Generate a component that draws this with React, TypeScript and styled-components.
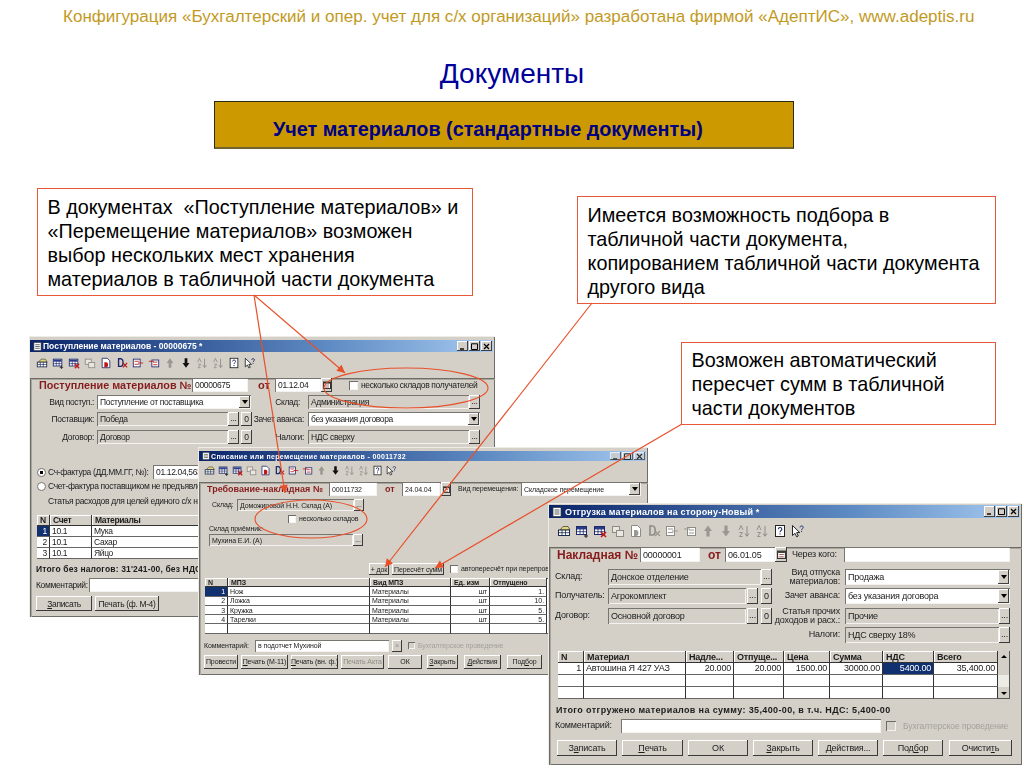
import styled, { createGlobalStyle } from "styled-components";

const GlobalStyle = createGlobalStyle`
  html, body {
    margin: 0;
    padding: 0;
    background: #fff;
    font-family: "Liberation Sans", Arial, sans-serif;
  }
`;

const Slide = styled.div`
  position: relative;
  width: 1024px;
  height: 768px;
  overflow: hidden;
  background: #fff;
`;

const TopLine = styled.div`
  padding-top: 8px;
  padding-left: 63px;
  font-size: 17.05px;
  line-height: 18px;
  color: #c29a1e;
  white-space: nowrap;
`;

const Heading = styled.h1`
  margin: 28px 0 0;
  text-align: center;
  font-size: 28px;
  line-height: 40px;
  font-weight: 400;
  color: #000099;
`;

const Banner = styled.div`
  margin: 7px 0 0 214px;
  width: 580px;
  height: 48px;
  box-sizing: border-box;
  padding: 15px 0 0 58px;
  background: #cc9900;
  border: 1px solid #2b2b10;
  border-bottom: 2px solid #6f6430;
  font-size: 19.8px;
  line-height: 24px;
  font-weight: 700;
  color: #000080;
  white-space: nowrap;
`;

const Callout = styled.div<{ $x: number; $y: number; $w: number; $h: number; $pt: number }>`
  position: absolute;
  left: ${(p) => p.$x}px;
  top: ${(p) => p.$y}px;
  width: ${(p) => p.$w}px;
  height: ${(p) => p.$h}px;
  box-sizing: border-box;
  padding: ${(p) => p.$pt}px 0 0 9.5px;
  background: #fff;
  border: 1px solid #e8583a;
  font-size: 19.8px;
  line-height: 24px;
  color: #000;
  white-space: pre;
`;

const Overlay = styled.svg`
  position: absolute;
  left: 0;
  top: 0;
  pointer-events: none;
`;

const Win = styled.div<{ $x: number; $y: number; $w: number; $h: number; $fs: number; $ls: number; $pt: number }>`
  position: absolute;
  left: ${(p) => p.$x}px;
  top: ${(p) => p.$y}px;
  width: ${(p) => p.$w}px;
  height: ${(p) => p.$h}px;
  box-sizing: border-box;
  padding-top: ${(p) => p.$pt}px;
  overflow: hidden;
  background: #d4d0c8;
  box-shadow: inset 1px 1px #eeece6, inset -1px -1px #6e6c66;
  font-size: ${(p) => p.$fs}px;
  letter-spacing: ${(p) => p.$ls}px;
  color: #1c1c1c;
  filter: blur(0.3px);
`;

const TitleBar = styled.div<{ $h: number }>`
  display: flex;
  align-items: center;
  height: ${(p) => p.$h}px;
  margin: 0 2px 0 1px;
  padding-left: 3px;
  background: linear-gradient(90deg, #0a246a, #5f8cc4 65%, #a6caf0);
  color: #fff;
  font-weight: 700;
  white-space: nowrap;
`;

const TitleText = styled.span<{ $ml: number; $ls: number }>`
  margin-left: ${(p) => p.$ml}px;
  letter-spacing: ${(p) => p.$ls}px;
`;

const WinButtons = styled.div<{ $dim?: boolean }>`
  display: flex;
  gap: 1px;
  margin-left: auto;
  margin-right: 1px;
  height: calc(100% - 2px);
  opacity: ${(p) => (p.$dim ? 0.75 : 1)};
`;

const WinButton = styled.div`
  width: 11px;
  background: #d4d0c8;
  box-shadow: inset -1px -1px #404040, inset 1px 1px #fff;
  display: flex;
  align-items: center;
  justify-content: center;
`;

const Toolbar = styled.div<{ $h: number; $pl: number; $gap: number }>`
  display: flex;
  align-items: center;
  height: ${(p) => p.$h}px;
  padding-left: ${(p) => p.$pl}px;
  gap: ${(p) => p.$gap}px;
`;

const Panel = styled.div`
  height: 100%;
  margin-left: 1px;
  box-shadow: inset 1px 1px #6e6c66, inset 2px 2px #a8a59d;
`;

const Row = styled.div<{ $h: number; $mt: number; $ml?: number }>`
  display: flex;
  align-items: center;
  height: ${(p) => p.$h}px;
  margin-top: ${(p) => p.$mt}px;
  margin-left: ${(p) => (p.$ml ?? 0) - 1}px;
  white-space: nowrap;
`;

const DocTitle = styled.div<{ $w: number; $ml: number; $size: number }>`
  flex: none;
  width: ${(p) => p.$w}px;
  margin-left: ${(p) => p.$ml}px;
  font-size: ${(p) => p.$size}px;
  font-weight: 700;
  letter-spacing: 0;
  color: #861c1c;
`;

const Label = styled.div<{ $w?: number; $ml?: number; $right?: boolean; $color?: string; $bold?: boolean; $size?: number; $ls?: number }>`
  flex: none;
  width: ${(p) => (p.$w ? `${p.$w}px` : "auto")};
  margin-left: ${(p) => p.$ml ?? 0}px;
  text-align: ${(p) => (p.$right ? "right" : "left")};
  line-height: 1.05;
  color: ${(p) => p.$color ?? "inherit"};
  font-weight: ${(p) => (p.$bold ? 700 : 400)};
  ${(p) => (p.$size ? `font-size: ${p.$size}px;` : "")}
  ${(p) => (p.$ls !== undefined ? `letter-spacing: ${p.$ls}px;` : "")}
`;

const Field = styled.div<{ $w: number; $ml?: number; $gray?: boolean }>`
  flex: none;
  display: flex;
  align-items: center;
  box-sizing: border-box;
  width: ${(p) => p.$w}px;
  height: 100%;
  margin-left: ${(p) => p.$ml ?? 0}px;
  padding: 0 1px 0 3px;
  overflow: hidden;
  background: ${(p) => (p.$gray ? "#d4d0c8" : "#fff")};
  box-shadow: inset 1px 1px #77756f, inset -1px -1px #f4f3ef;
`;

const Btn = styled.div<{ $w: number; $ml?: number; $off?: boolean }>`
  flex: none;
  display: flex;
  align-items: center;
  justify-content: center;
  box-sizing: border-box;
  width: ${(p) => p.$w}px;
  height: 100%;
  margin-left: ${(p) => p.$ml ?? 0}px;
  background: #d4d0c8;
  box-shadow: inset -1px -1px #3a3a3a, inset 1px 1px #fff;
  color: ${(p) => (p.$off ? "#8f8d87" : "inherit")};
`;

const DropBtn = styled.div`
  flex: none;
  width: 11px;
  height: calc(100% - 2px);
  margin-left: auto;
  background: #d4d0c8;
  box-shadow: inset -1px -1px #404040, inset 1px 1px #fff;
  display: flex;
  align-items: center;
  justify-content: center;

  &::after {
    content: "";
    border-left: 3px solid transparent;
    border-right: 3px solid transparent;
    border-top: 4px solid #000;
  }
`;

const Check = styled.div<{ $size: number; $ml: number; $off?: boolean }>`
  flex: none;
  width: ${(p) => p.$size}px;
  height: ${(p) => p.$size}px;
  margin-left: ${(p) => p.$ml}px;
  background: ${(p) => (p.$off ? "#d4d0c8" : "#fff")};
  box-shadow: inset 1px 1px #6e6c66, inset -1px -1px #f4f3ef;
`;

const Radio = styled.div<{ $on?: boolean }>`
  flex: none;
  box-sizing: border-box;
  width: 9px;
  height: 9px;
  margin-left: 8px;
  border-radius: 50%;
  border: 1px solid #77756f;
  background: ${(p) => (p.$on ? "radial-gradient(circle, #000 0 1.5px, #fff 2px)" : "#fff")};
`;

const Grid = styled.div<{ $cols: string; $rowH: number; $ml: number; $mt: number }>`
  display: grid;
  grid-template-columns: ${(p) => p.$cols};
  grid-auto-rows: ${(p) => p.$rowH}px;
  margin-left: ${(p) => p.$ml - 1}px;
  margin-top: ${(p) => p.$mt}px;
  background: #fff;
  box-shadow: inset 0 0 0 1px #555;
  line-height: 1;
  white-space: nowrap;
`;

const Cell = styled.div<{ $right?: boolean; $sel?: boolean }>`
  overflow: hidden;
  box-sizing: border-box;
  display: flex;
  align-items: center;
  justify-content: ${(p) => (p.$right ? "flex-end" : "flex-start")};
  padding: 0 2px;
  border-right: 1.5px solid #333;
  border-bottom: 1px solid #666;
  background: ${(p) => (p.$sel ? "#10306f" : "#fff")};
  color: ${(p) => (p.$sel ? "#fff" : "#222")};
`;

const HeadCell = styled.div`
  overflow: hidden;
  box-sizing: border-box;
  display: flex;
  align-items: center;
  padding: 0 3px;
  background: #d4d0c8;
  box-shadow: inset -1px -1px #333, inset 1px 1px #fff;
  font-weight: 700;
`;

const ScrollBar = styled.div<{ $h: number; $mt: number }>`
  flex: none;
  display: flex;
  flex-direction: column;
  align-items: center;
  justify-content: space-between;
  box-sizing: border-box;
  width: 12px;
  height: ${(p) => p.$h}px;
  padding: 4px 0;
  margin-top: ${(p) => p.$mt}px;
  background: linear-gradient(#d4d0c8 0 24px, #ecebe6 24px 36px, #d4d0c8 36px);
  box-shadow: inset -1px -1px #555;

  &::before {
    content: "";
    border-left: 3px solid transparent;
    border-right: 3px solid transparent;
    border-bottom: 3px solid #000;
  }

  &::after {
    content: "";
    border-left: 3px solid transparent;
    border-right: 3px solid transparent;
    border-top: 3px solid #000;
  }
`;

const TableRow = styled.div`
  display: flex;
`;

type IconKind = "grid" | "add" | "del" | "copy" | "docD" | "docX" | "moveA" | "moveB" | "up" | "down" | "az" | "za" | "help" | "what";

const ToolIcon = ({ kind, size, muted }: { kind: IconKind; size: number; muted?: boolean }) => {
  const ink = muted ? "#8d8b85" : "#1d2a6b";
  const red = muted ? "#9a9891" : "#c01818";
  const table = (
    <>
      <rect x="1.5" y="2.5" width="10" height="8" fill="#fff" stroke={ink} />
      <path d="M1.5 5h10M1.5 7.7h10M5 5v5.5M8.3 5v5.5" stroke={ink} strokeWidth="0.8" />
      <rect x="2" y="3" width="9" height="2" fill={muted ? "#a9a79f" : "#2a3a8a"} />
    </>
  );
  return (
    <svg width={size} height={size} viewBox="0 0 14 14" style={{ flex: "none" }}>
      {kind === "grid" && (
        <>
          <path d="M3 6l3-3.5h5L13 6z" fill="#e6d774" stroke="#333" strokeWidth="0.7" />
          <rect x="1.5" y="6" width="11" height="5.5" fill="#fff" stroke="#1d2a4b" />
          <path d="M1.5 8.7h11M5 6v5.5M8.5 6v5.5" stroke="#1d2a4b" strokeWidth="0.8" />
        </>
      )}
      {kind === "add" && (
        <>
          {table}
          <path d="M9 12h4M11 10v4" stroke="#222" strokeWidth="1" />
        </>
      )}
      {kind === "del" && (
        <>
          {table}
          <path d="M8 8l5 5M13 8l-5 5" stroke={red} strokeWidth="1.6" />
        </>
      )}
      {kind === "copy" && (
        <>
          <rect x="1.5" y="2.5" width="7" height="6" fill="#e9e7e0" stroke="#8d8b85" />
          <rect x="5.5" y="6.5" width="7" height="6" fill="#e9e7e0" stroke="#8d8b85" />
        </>
      )}
      {kind === "docD" && (
        <>
          <path d="M2.5 1.5h6l3 3v8h-9z" fill="#fff" stroke={ink} />
          <path d="M5 6v6h2.2c3 0 3-6 0-6z" fill={red} />
        </>
      )}
      {kind === "docX" && (
        <>
          <path d="M3 2v9h2.5c3.6 0 3.6-9 0-9z" fill="none" stroke={ink} strokeWidth="1.6" />
          <path d="M8 7l5 5M13 7l-5 5" stroke={red} strokeWidth="1.3" />
        </>
      )}
      {kind === "moveA" && (
        <>
          <rect x="1.5" y="2.5" width="8" height="9" fill="#fff" stroke={ink} />
          <path d="M3 5h5M3 8.5h5M7 7h6" stroke={red} strokeWidth="1" />
        </>
      )}
      {kind === "moveB" && (
        <>
          <rect x="4.5" y="3.5" width="8" height="8" fill="#fff" stroke={ink} />
          <path d="M6 6h5M6 9h5M1 5h6" stroke={red} strokeWidth="1" />
        </>
      )}
      {kind === "up" && <path d="M7 1.5L11 7H8.6v5.5H5.4V7H3z" fill="#9a9891" />}
      {kind === "down" && <path d="M7 12.5L3 7h2.4V1.5h3.2V7H11z" fill={muted ? "#9a9891" : "#111"} />}
      {(kind === "az" || kind === "za") && (
        <>
          <path d="M2 6l2-4.5L6 6M2.5 8.5h3l-3 4h3" fill="none" stroke="#8d8b85" strokeWidth="0.9" />
          <path d="M10 2v10M8 9.5l2 2.8 2-2.8" fill="none" stroke="#8d8b85" strokeWidth="1" />
        </>
      )}
      {kind === "help" && (
        <>
          <rect x="2.5" y="1.5" width="9" height="11" fill="#fff" stroke="#222" />
          <path d="M5.4 5.2c0-2.3 3.4-2.3 3.4 0 0 1.5-1.8 1.4-1.8 3M7 9.4v1.2" fill="none" stroke="#1d2a6b" strokeWidth="1.1" />
        </>
      )}
      {kind === "what" && (
        <>
          <path d="M1.5 1.5v10l2.5-2.2 1.7 3.5 1.6-.8-1.7-3.4h3.2z" fill="#fff" stroke="#111" strokeWidth="0.9" />
          <path d="M9 3.4c0-2 3.2-2 3.2 0 0 1.3-1.6 1.3-1.6 2.7M10.6 7v1" fill="none" stroke="#1d2a6b" strokeWidth="1" />
        </>
      )}
    </svg>
  );
};

const TOOLS: IconKind[] = ["grid", "add", "del", "copy", "docD", "docX", "moveA", "moveB", "up", "down", "az", "za", "help", "what"];

const Tools = ({ h, size, pl, gap, muted }: { h: number; size: number; pl: number; gap: number; muted: IconKind[] }) => (
  <Toolbar $h={h} $pl={pl} $gap={gap}>
    {TOOLS.map((k) => (
      <ToolIcon key={k} kind={k} size={size} muted={muted.includes(k)} />
    ))}
  </Toolbar>
);

const DocIcon = ({ size }: { size: number }) => (
  <svg width={size} height={size} viewBox="0 0 10 10" style={{ flex: "none" }}>
    <rect x="1" y="0.5" width="8" height="9" fill="#fff" stroke="#333" strokeWidth="0.7" />
    <path d="M2.5 3h5M2.5 5h5M2.5 7h5" stroke="#333" strokeWidth="0.8" />
  </svg>
);

const WinControls = ({ dim }: { dim?: boolean }) => (
  <WinButtons $dim={dim}>
    <WinButton>
      <svg width="7" height="7" viewBox="0 0 7 7"><path d="M1 6h4" stroke="#000" strokeWidth="1.4" /></svg>
    </WinButton>
    <WinButton>
      <svg width="7" height="7" viewBox="0 0 7 7"><path d="M.5.8h6v5.7h-6z" fill="none" stroke="#000" /></svg>
    </WinButton>
    <WinButton>
      <svg width="7" height="7" viewBox="0 0 7 7"><path d="M1 1l5 5M6 1L1 6" stroke="#000" strokeWidth="1.2" /></svg>
    </WinButton>
  </WinButtons>
);

const Cal = ({ w, ml }: { w: number; ml?: number }) => (
  <Btn $w={w} $ml={ml}>
    <svg width={w - 3} height={w - 3} viewBox="0 0 8 8">
      <rect x="0.5" y="1" width="7" height="6.5" fill="#fff" stroke="#333" />
      <rect x="1" y="1" width="6" height="1.6" fill="#333" />
      <path d="M2 4h4M2 6h4" stroke="#883030" strokeWidth="0.7" />
    </svg>
  </Btn>
);

const DotsText = styled.span`
  line-height: 1;
  margin-top: -2px;
`;

const Dots = ({ w, ml }: { w: number; ml?: number }) => (
  <Btn $w={w} $ml={ml}>
    <DotsText>...</DotsText>
  </Btn>
);

const ReceiptWindow = () => (
  <Win $x={29} $y={336} $w={466} $h={281} $fs={8.5} $ls={-0.35} $pt={4}>
    <TitleBar $h={12}>
      <DocIcon size={9} />
      <TitleText $ml={1} $ls={0}>Поступление материалов - 00000675 *</TitleText>
      <WinControls />
    </TitleBar>
    <Tools h={22} size={12} pl={7} gap={4} muted={["copy", "up", "az", "za"]} />
    <Panel>
      <Row $h={14} $mt={4}>
        <DocTitle $w={153} $ml={10} $size={10.8}>Поступление материалов №</DocTitle>
        <Field $w={56}>00000675</Field>
        <DocTitle $w={17} $ml={10} $size={11}>от</DocTitle>
        <Field $w={46}>01.12.04</Field>
        <Cal w={11} />
        <Check $size={9} $ml={17} />
        <Label $ml={3}>несколько складов получателей</Label>
      </Row>
      <Row $h={14} $mt={3}>
        <Label $w={65} $right>Вид поступ.:</Label>
        <Field $w={154} $ml={3}>Поступление от поставщика<DropBtn /></Field>
        <Label $w={49} $right>Склад:</Label>
        <Field $w={161} $ml={8} $gray>Администрация</Field>
        <Dots w={11} />
      </Row>
      <Row $h={14} $mt={3}>
        <Label $w={65} $right>Поставщик:</Label>
        <Field $w={131} $ml={3} $gray>Победа</Field>
        <Dots w={11} />
        <Btn $w={11} $ml={2}>0</Btn>
        <Label $w={52} $right>Зачет аванса:</Label>
        <Field $w={172} $ml={4}>без указания договора<DropBtn /></Field>
      </Row>
      <Row $h={14} $mt={4}>
        <Label $w={65} $right>Договор:</Label>
        <Field $w={131} $ml={3} $gray>Договор</Field>
        <Dots w={11} />
        <Btn $w={11} $ml={2}>0</Btn>
        <Label $w={52} $right>Налоги:</Label>
        <Field $w={161} $ml={4} $gray>НДС сверху</Field>
        <Dots w={11} />
      </Row>
      <Row $h={14} $mt={21}>
        <Radio $on />
        <Label $w={105} $ml={2}>Сч-фактура (ДД.ММ.ГГ, №):</Label>
        <Field $w={120}>01.12.04,5634</Field>
      </Row>
      <Row $h={14} $mt={0}>
        <Radio />
        <Label $ml={2}>Счет-фактура поставщиком не предъявлен</Label>
      </Row>
      <Row $h={14} $mt={1}>
        <Label $ml={19}>Статья расходов для целей единого с/х налога</Label>
      </Row>
      <Grid $cols="13px 42px 320px" $rowH={11} $ml={8} $mt={7}>
        <HeadCell>N</HeadCell><HeadCell>Счет</HeadCell><HeadCell>Материалы</HeadCell>
        <Cell $right $sel>1</Cell><Cell>10.1</Cell><Cell>Мука</Cell>
        <Cell $right>2</Cell><Cell>10.1</Cell><Cell>Сахар</Cell>
        <Cell $right>3</Cell><Cell>10.1</Cell><Cell>Яйцо</Cell>
      </Grid>
      <Row $h={14} $mt={3} $ml={7}>
        <Label $bold $ls={0.15}>Итого без налогов: 31'241-00, без НДС</Label>
      </Row>
      <Row $h={14} $mt={2} $ml={7}>
        <Label $w={53}>Комментарий:</Label>
        <Field $w={200}></Field>
      </Row>
      <Row $h={15} $mt={4} $ml={7}>
        <Btn $w={56}><span><u>З</u>аписать</span></Btn>
        <Btn $w={64} $ml={3}>Печать (ф. М-4)</Btn>
      </Row>
    </Panel>
  </Win>
);

const TransferWindow = () => (
  <Win $x={198} $y={447} $w={450} $h={228} $fs={7} $ls={-0.1} $pt={4}>
    <TitleBar $h={10}>
      <DocIcon size={8} />
      <TitleText $ml={1} $ls={0.35}>Списание или перемещение материалов - 00011732</TitleText>
      <WinControls dim />
    </TitleBar>
    <Tools h={19} size={11} pl={6} gap={3} muted={["copy", "up", "az", "za"]} />
    <Panel>
      <Row $h={14} $mt={2}>
        <DocTitle $w={122} $ml={9} $size={9}>Требование-накладная №</DocTitle>
        <Field $w={48}>00011732</Field>
        <DocTitle $w={17} $ml={8} $size={9}>от</DocTitle>
        <Field $w={38}>24.04.04</Field>
        <Cal w={10} ml={1} />
        <Label $w={60} $ml={7}>Вид перемещения:</Label>
        <Field $w={120} $ml={3}>Складское перемещение<DropBtn /></Field>
      </Row>
      <Row $h={12} $mt={3}>
        <Label $w={22} $ml={14}>Склад:</Label>
        <Field $w={117} $ml={3} $gray>Доможировой Н.Н. Склад (А)</Field>
        <Dots w={10} />
      </Row>
      <Row $h={11} $mt={2}>
        <Check $size={8} $ml={90} />
        <Label $ml={3}>несколько складов</Label>
      </Row>
      <Row $h={9} $mt={0} $ml={11}>
        <Label>Склад приёмник:</Label>
      </Row>
      <Row $h={12} $mt={1} $ml={11}>
        <Field $w={144} $gray>Мухина Е.И. (А)</Field>
        <Dots w={10} />
      </Row>
      <Row $h={12} $mt={17}>
        <Btn $w={20} $ml={171}>+ док</Btn>
        <Btn $w={52} $ml={3}>Пересчёт сумм</Btn>
        <Check $size={8} $ml={6} />
        <Label $ml={3}>автопересчёт при перепроводке</Label>
      </Row>
      <Grid $cols="23px 142px 81px 39px 57px" $rowH={9.3} $ml={7} $mt={3}>
        <HeadCell>N</HeadCell><HeadCell>МПЗ</HeadCell><HeadCell>Вид МПЗ</HeadCell><HeadCell>Ед. изм</HeadCell><HeadCell>Отпущено</HeadCell>
        <Cell $right $sel>1</Cell><Cell>Нож</Cell><Cell>Материалы</Cell><Cell $right>шт</Cell><Cell $right>1.</Cell>
        <Cell $right>2</Cell><Cell>Ложка</Cell><Cell>Материалы</Cell><Cell $right>шт</Cell><Cell $right>10.</Cell>
        <Cell $right>3</Cell><Cell>Кружка</Cell><Cell>Материалы</Cell><Cell $right>шт</Cell><Cell $right>5.</Cell>
        <Cell $right>4</Cell><Cell>Тарелки</Cell><Cell>Материалы</Cell><Cell $right>шт</Cell><Cell $right>5.</Cell>
        <Cell /><Cell /><Cell /><Cell /><Cell />
      </Grid>
      <Row $h={12} $mt={6} $ml={6}>
        <Label $w={45}>Комментарий:</Label>
        <Field $w={134} $ml={6}>в подотчет Мухиной</Field>
        <Btn $w={10} $ml={3} $off>×</Btn>
        <Check $size={7} $ml={6} $off />
        <Label $ml={3} $color="#a3a19b">Бухгалтерское проведение</Label>
      </Row>
      <Row $h={14} $mt={3} $ml={6}>
        <Btn $w={34}>Провести</Btn>
        <Btn $w={47} $ml={3}><span><u>П</u>ечать (М-11)</span></Btn>
        <Btn $w={47} $ml={3}><span><u>П</u>ечать (вн. ф.)</span></Btn>
        <Btn $w={43} $ml={3} $off>Печать Акта</Btn>
        <Btn $w={34} $ml={4}>ОК</Btn>
        <Btn $w={31} $ml={5}><span><u>З</u>акрыть</span></Btn>
        <Btn $w={37} $ml={6}><span><u>Д</u>ействия</span></Btn>
        <Btn $w={35} $ml={6}><span>Под<u>б</u>ор</span></Btn>
      </Row>
    </Panel>
  </Win>
);

const ShipmentWindow = () => (
  <Win $x={548} $y={503} $w={474} $h={262} $fs={9} $ls={-0.2} $pt={2}>
    <TitleBar $h={13}>
      <DocIcon size={10} />
      <TitleText $ml={3} $ls={0.2}>Отгрузка материалов на сторону-Новый *</TitleText>
      <WinControls />
    </TitleBar>
    <Tools h={25} size={14} pl={9} gap={4} muted={["copy", "docD", "docX", "moveA", "moveB", "up", "down", "az", "za"]} />
    <Panel>
      <Row $h={15} $mt={4}>
        <DocTitle $w={83} $ml={9} $size={12}>Накладная №</DocTitle>
        <Field $w={60}>00000001</Field>
        <DocTitle $w={17} $ml={8} $size={12}>от</DocTitle>
        <Field $w={50}>06.01.05</Field>
        <Cal w={12} />
        <Label $w={47} $ml={5}>Через кого:</Label>
        <Field $w={166} $ml={5}></Field>
      </Row>
      <Row $h={16} $mt={7} $ml={7}>
        <Label $w={53}>Склад:</Label>
        <Field $w={153} $gray>Донское отделение</Field>
        <Dots w={11} />
        <Label $w={68} $right>Вид отпуска<br />материалов:</Label>
        <Field $w={165} $ml={5}>Продажа<DropBtn /></Field>
      </Row>
      <Row $h={16} $mt={3} $ml={7}>
        <Label $w={53}>Получатель:</Label>
        <Field $w={138} $gray>Агрокомплект</Field>
        <Dots w={11} ml={1} />
        <Btn $w={11} $ml={3}>0</Btn>
        <Label $w={68} $right>Зачет аванса:</Label>
        <Field $w={165} $ml={5}>без указания договора<DropBtn /></Field>
      </Row>
      <Row $h={16} $mt={4} $ml={7}>
        <Label $w={53}>Договор:</Label>
        <Field $w={138} $gray>Основной договор</Field>
        <Dots w={11} ml={1} />
        <Btn $w={11} $ml={3}>0</Btn>
        <Label $w={68} $right>Статья прочих<br />доходов и расх.:</Label>
        <Field $w={154} $ml={5} $gray>Прочие</Field>
        <Dots w={11} />
      </Row>
      <Row $h={16} $mt={3}>
        <Label $w={292} $right>Налоги:</Label>
        <Field $w={154} $ml={5} $gray>НДС сверху 18%</Field>
        <Dots w={11} />
      </Row>
      <TableRow>
        <Grid $cols="26px 102px 48px 50px 46px 53px 51px 64px" $rowH={12} $ml={10} $mt={8}>
          <HeadCell>N</HeadCell><HeadCell>Материал</HeadCell><HeadCell>Надле...</HeadCell><HeadCell>Отпуще...</HeadCell>
          <HeadCell>Цена</HeadCell><HeadCell>Сумма</HeadCell><HeadCell>НДС</HeadCell><HeadCell>Всего</HeadCell>
          <Cell $right>1</Cell><Cell>Автошина Я 427 УАЗ</Cell><Cell $right>20.000</Cell><Cell $right>20.000</Cell>
          <Cell $right>1500.00</Cell><Cell $right>30000.00</Cell><Cell $right $sel>5400.00</Cell><Cell $right>35,400.00</Cell>
          <Cell /><Cell /><Cell /><Cell /><Cell /><Cell /><Cell /><Cell />
          <Cell /><Cell /><Cell /><Cell /><Cell /><Cell /><Cell /><Cell />
        </Grid>
        <ScrollBar $h={48} $mt={8} />
      </TableRow>
      <Row $h={13} $mt={5} $ml={8}>
        <Label $bold $ls={0.37}>Итого отгружено материалов на сумму: 35,400-00, в т.ч. НДС: 5,400-00</Label>
      </Row>
      <Row $h={14} $mt={2} $ml={7}>
        <Label $w={66}>Комментарий:</Label>
        <Field $w={260}></Field>
        <Check $size={10} $ml={5} $off />
        <Label $ml={7} $color="#a3a19b" $size={8.5} $ls={-0.05}>Бухгалтерское проведение</Label>
      </Row>
      <Row $h={16} $mt={7} $ml={9}>
        <Btn $w={60}><span>З<u>а</u>писать</span></Btn>
        <Btn $w={61} $ml={5}><span><u>П</u>ечать</span></Btn>
        <Btn $w={60} $ml={5}>ОК</Btn>
        <Btn $w={60} $ml={5}><span><u>З</u>акрыть</span></Btn>
        <Btn $w={60} $ml={5}><span><u>Д</u>ействия...</span></Btn>
        <Btn $w={60} $ml={5}><span>Под<u>б</u>ор</span></Btn>
        <Btn $w={63} $ml={6}><span>Очисти<u>т</u>ь</span></Btn>
      </Row>
    </Panel>
  </Win>
);

const ARROWS = [
  { x1: 254, y1: 295, x2: 285, y2: 493 },
  { x1: 254, y1: 295, x2: 345, y2: 373 },
  { x1: 592, y1: 303, x2: 385, y2: 567 },
  { x1: 682, y1: 424, x2: 435, y2: 568 },
];

const arrowHead = (a: { x1: number; y1: number; x2: number; y2: number }) => {
  const ang = Math.atan2(a.y2 - a.y1, a.x2 - a.x1);
  const len = 8;
  const side = 4;
  const bx = a.x2 - len * Math.cos(ang);
  const by = a.y2 - len * Math.sin(ang);
  const px = side * Math.sin(ang);
  const py = side * Math.cos(ang);
  return `${a.x2},${a.y2} ${bx + px},${by - py} ${bx - px},${by + py}`;
};

const App = () => (
  <>
    <GlobalStyle />
    <Slide>
      <TopLine>Конфигурация «Бухгалтерский и опер. учет для с/х организаций» разработана фирмой «АдептИС», www.adeptis.ru</TopLine>
      <Heading>Документы</Heading>
      <Banner>Учет материалов (стандартные документы)</Banner>

      <Callout $x={37} $y={188} $w={436} $h={108} $pt={6}>
        {"В документах  «Поступление материалов» и\n«Перемещение материалов» возможен\nвыбор нескольких мест хранения\nматериалов в табличной части документа"}
      </Callout>
      <Callout $x={577} $y={196} $w={419} $h={108} $pt={6}>
        {"Имеется возможность подбора в\nтабличной части документа,\nкопированием табличной части документа\nдругого вида"}
      </Callout>
      <Callout $x={681} $y={342} $w={315} $h={83} $pt={5}>
        {"Возможен автоматический\nпересчет сумм в табличной\nчасти документов"}
      </Callout>

      <ReceiptWindow />
      <TransferWindow />
      <ShipmentWindow />

      <Overlay width="1024" height="768">
        {ARROWS.map((a) => (
          <g key={`${a.x2}-${a.y2}`}>
            <line x1={a.x1} y1={a.y1} x2={a.x2} y2={a.y2} stroke="#e8502a" strokeWidth="1.2" />
            <polygon points={arrowHead(a)} fill="#e8502a" />
          </g>
        ))}
        <ellipse cx="406" cy="388" rx="82" ry="20" fill="none" stroke="#e8502a" strokeWidth="1.1" />
        <ellipse cx="311" cy="519" rx="56" ry="19" fill="none" stroke="#e8502a" strokeWidth="1.1" />
      </Overlay>
    </Slide>
  </>
);

export default App;
